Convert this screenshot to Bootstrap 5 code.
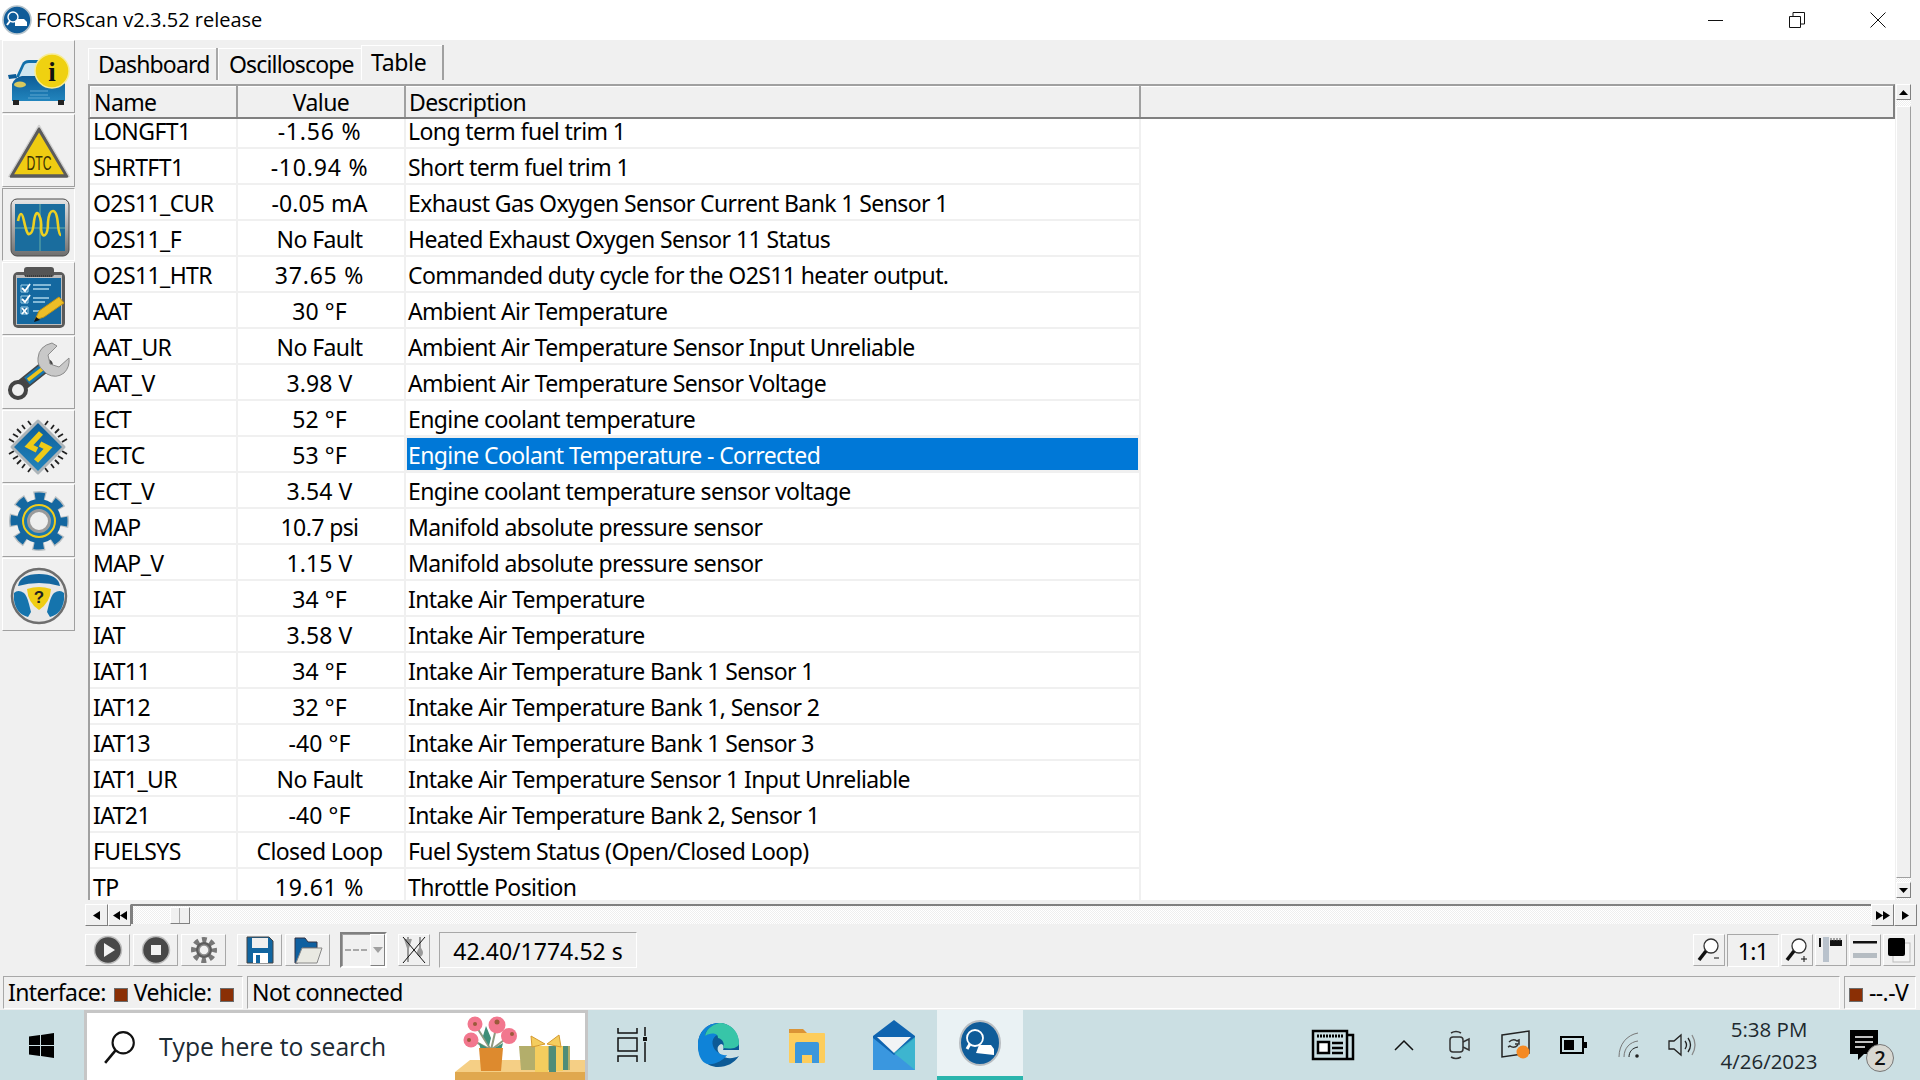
<!DOCTYPE html>
<html lang="en"><head><meta charset="utf-8"><title>FORScan</title>
<link href="https://cdn.jsdelivr.net/npm/bootstrap@5.3.0/dist/css/bootstrap.min.css" rel="stylesheet">
<style>
html,body{height:100%;overflow:hidden;background:#f0f0f0}
body{font-family:"Noto Sans","Liberation Sans",sans-serif;font-size:23px;letter-spacing:-.6px;color:#000}
.shell{height:1080px;width:1920px}
.titlebar{height:40px;background:#fff;font-family:"Open Sans",sans-serif;font-size:20px;letter-spacing:0;padding-left:2px}
.titlebar .wctl{width:81px;height:40px}
.winbody{height:936px}
.sidebar{width:88px;padding-left:2px;flex:none}
.sidebtn{width:73px;height:73px;margin-bottom:1px;background:#f0f0f0;border:1px solid;border-color:#fff #a0a0a0 #a0a0a0 #fff;padding:0;display:block;border-radius:0}
.sidebtn svg{display:block;width:71px;height:71px}
.sidebtn.on{border-color:#a0a0a0 #fff #fff #a0a0a0}
.work{width:1832px;flex:none}
.tabs{height:44px;padding-top:4px;border:0;flex-wrap:nowrap}
.tabs .nav-link{height:32px;margin:4px 0 0;padding:0 0 0 10px;border:0;border-radius:0;background:#f0f0f0;color:#000;line-height:33px;border-right:2px solid #a8a8a8;box-shadow:inset 1px 1px 0 #fff;font-size:23px;white-space:nowrap;letter-spacing:-.85px}
.tabs .nav-link.active{height:35px;margin-top:1px;background:#f0f0f0;line-height:34px;color:#000;border-right:2px solid #a0a0a0;letter-spacing:-.3px}
.tab1{width:130px}
.tabs .nav-link.tab2{width:143px;padding-left:11px;border-right:0}
.tab3{width:83px}
.gridrow{height:816px}
.gridmain{width:1807px;flex:none}
.gridhead{height:35px;border:2px solid #a0a0a0;border-right-color:#808080;border-bottom-color:#808080;background:#f0f0f0;line-height:33px;box-shadow:inset 1px 1px 0 #fff}
.gridhead>div{height:100%;flex:none}
.hc1{width:148px;padding-left:4px;border-right:2px solid #a0a0a0}
.hc2{width:168px;text-align:center;border-right:2px solid #a0a0a0}
.hc3{width:735px;padding-left:3px;border-right:2px solid #a0a0a0}
.rowsview{height:781px;overflow:hidden;background:#fff;border-left:2px solid #a0a0a0}
table.sheet{width:1051px;margin:-6px 0 0;table-layout:fixed;border-collapse:separate;border-spacing:0;background:#fff;--bs-table-bg:#fff}
table.sheet td{height:36px;padding:3px 0 0 3px;border:0;border-right:2px solid #f0f0f0;border-bottom:2px solid #f0f0f0;line-height:31px;white-space:nowrap;overflow:hidden;color:#000;font-size:23px;background:#fff}
table.sheet td.cv{text-align:center;padding:3px 3px 0 0}
table.sheet td.nm{letter-spacing:.1px}
table.sheet td.pc{letter-spacing:.8px}
table.sheet td.dsc{padding-left:2px}
table.sheet td.picked{background:#0078d7;color:#fff;box-shadow:inset 0 0 0 1px #f0f0f0}
.colname{width:148px}.colval{width:168px}.coldesc{width:735px}
.vscroll{width:15px;margin-left:1px;background:repeating-conic-gradient(#eee 0 25%,#fff 0 50%) 0 0/2px 2px}
.sbtn{background:#f0f0f0;border:1px solid;border-color:#fff #808080 #808080 #fff;display:flex;align-items:center;justify-content:center;padding:0}
.vscroll .sbtn{height:16px;width:15px}
.vthumb{height:772px;background:#f0f0f0;border:1px solid;border-color:#fff #a0a0a0 #a0a0a0 #fff;margin-top:6px}
.hscroll{height:22px;margin-top:4px;margin-left:-3px}
.hscroll .sbtn{width:23px;height:22px}
.htrack{width:1740px;height:20px;border-top:2px solid #808080;border-left:2px solid #808080;background:repeating-conic-gradient(#eee 0 25%,#fff 0 50%) 0 0/2px 2px;position:relative;flex:none}
.hthumb{position:absolute;left:37px;top:1px;width:20px;height:17px;background:#f0f0f0;border:1px solid;border-color:#fff #808080 #808080 #fff}
.hthumb::after{content:"";position:absolute;left:8px;top:0;bottom:0;border-left:1px solid #aaa}
.toolbar{height:38px;margin-top:5px;margin-left:-3px;gap:3px}
.rgrp{gap:2px}
.tool{width:45px;height:32px;background:#f0f0f0;border:1px solid;border-color:#fff #a8a8a8 #a8a8a8 #fff;padding:0;display:flex;align-items:center;justify-content:center;flex:none;border-radius:0}
.tool.nar{width:32px}
.combo{width:47px;height:36px;margin:0 8px 0 7px;border:2px solid;border-color:#808080 #fff #fff #808080;background:#f0f0f0;box-shadow:inset 1px 1px 0 #a0a0a0;flex:none;position:relative;display:flex;align-items:center;padding-left:3px}
.combo b{display:block;width:22px;border-top:2px dashed #a8a8a8}
.combo i{position:absolute;right:0;top:0;bottom:0;width:15px;border:1px solid;border-color:#fff #808080 #808080 #fff;background:#f0f0f0}
.combo i::after{content:"";position:absolute;left:2px;top:12px;border:5px solid transparent;border-top:6px solid #a0a0a0}
.timebox{width:198px;height:36px;margin-left:6px;padding-top:2px;line-height:32px;text-align:center;border:1px solid;border-color:#a8a8a8 #fff #fff #a8a8a8;flex:none;letter-spacing:0}
.ratio{width:52px;height:33px;line-height:33px;text-align:center;border:1px solid;border-color:#a8a8a8 #fff #fff #a8a8a8;flex:none}
.statusbar{height:33px;padding:0 4px 0 3px;line-height:30px}
.stcell{height:33px;border:1px solid;border-color:#a8a8a8 #fff #fff #a8a8a8;padding:0 0 0 4px;flex:none;white-space:nowrap}
.led{display:inline-block;width:14px;height:14px;background:#8a2f05;border:1px solid #6c6c6c;margin:0 6px 0 8px;vertical-align:-1px}
.led.lead0{margin-left:0}
.taskbar{height:70px;margin-top:1px;background:#cbdfe3;font-family:"Open Sans",sans-serif;letter-spacing:0;color:#1c2a33}
.searchbox{width:504px;margin-left:2px;height:70px;background:#fff;border:3px solid #c6c6c6;border-bottom:0;font-size:24.700px;position:relative;flex:none;overflow:hidden}
.scene{position:absolute;left:368px;top:-3px}
.tbi{height:70px;display:flex;align-items:center;justify-content:center;flex:none;position:relative}
.tbi.cur{background:#eaf2f4;border-bottom:4px solid #2bb5ad}
.clock{width:122px;text-align:center;font-size:20.500px;line-height:32px;padding-top:3px;color:#20292e}
.nbadge{position:absolute;left:36px;top:34px;width:28px;height:28px;border-radius:50%;background:#d8d8d2;border:1px solid #777;font-size:20px;font-weight:600;line-height:26px;text-align:center;color:#111}
</style></head><body>
<div class="shell d-flex flex-column">

<header class="titlebar d-flex align-items-center">
<svg width="30" height="30" viewBox="0 0 30 30"><circle cx="15" cy="15" r="14" fill="#0f5c99" stroke="#b7c4cc" stroke-width="1.600"/><circle cx="11" cy="12" r="5" fill="none" stroke="#fff" stroke-width="1.400"/><path d="M8 16l-3 4" stroke="#fff" stroke-width="2"/><path d="M13 17l3-3h6l3 3v4H13z" fill="#fff"/></svg>
<span class="ms-1 flex-grow-1">FORScan v2.3.52 release</span>
<div class="wctl d-flex align-items-center justify-content-center"><svg width="16" height="16"><path d="M0 8.500h15" stroke="#111"/></svg></div>
<div class="wctl d-flex align-items-center justify-content-center"><svg width="16" height="16"><path d="M.5 4.500h11v11H.5zM4 4V.5h11.500V12H12" fill="none" stroke="#111"/></svg></div>
<div class="wctl d-flex align-items-center justify-content-center"><svg width="16" height="16"><path d="M.5.5l15 15M15.500.5l-15 15" stroke="#111"/></svg></div>
<div style="width:2px"></div>
</header>

<div class="winbody d-flex">
<aside class="sidebar">
<button class="sidebtn"><svg viewBox="0 0 71 71"><defs>
<linearGradient id="bl" x1="0" y1="0" x2="0" y2="1"><stop offset="0" stop-color="#0d5c97"/><stop offset="1" stop-color="#2285bd"/></linearGradient>
<linearGradient id="sv" x1="0" y1="0" x2="0" y2="1"><stop offset="0" stop-color="#e6e6e6"/><stop offset="1" stop-color="#6e6e6e"/></linearGradient></defs>
<path d="M5 34l8-1 1 4-8 1z" fill="#0d5c97"/><path d="M13 36l6-13q2-4 7-4h20v18z" fill="#1170aa"/><path d="M16 36l5-11q1-3 5-3h17l3 14z" fill="#cfe6ef"/>
<path d="M9 43q3-7 10-8h28q12 1 15 8v17H9z" fill="url(#bl)"/><rect x="10" y="59" width="6" height="5" fill="#222"/><rect x="55" y="59" width="6" height="5" fill="#222"/><ellipse cx="17" cy="43.500" rx="6" ry="3" fill="#d8c95d"/><path d="M27 50h18M27 54h18M25 57h22" stroke="#5fa6cf" stroke-width="1"/>
<circle cx="49" cy="30" r="17" fill="#efd111" stroke="#f7ec94" stroke-width="1.500"/><text x="49" y="40" font-family="Liberation Serif,serif" font-weight="700" font-size="27" text-anchor="middle" fill="#111">i</text></svg></button>
<button class="sidebtn"><svg viewBox="0 0 71 71"><path d="M36 14L8 61h56z" fill="#efcc12" stroke="#5b5b5b" stroke-width="3.500" stroke-linejoin="round"/><path d="M36 10L5.500 62" stroke="#d0d0d0" stroke-width="1.400"/><path d="M36 10l30.500 52" stroke="#d0d0d0" stroke-width="1.400"/><text x="36" y="55" font-family="Liberation Sans,sans-serif" font-size="20" text-anchor="middle" fill="#3b3204" textLength="25" lengthAdjust="spacingAndGlyphs">DTC</text></svg></button>
<button class="sidebtn on"><svg viewBox="0 0 71 71"><rect x="8" y="10" width="58" height="57" rx="6" fill="url(#sv)" stroke="#4a4a4a"/><rect x="12" y="15" width="50" height="47" fill="#1a6d9e"/><path d="M37 15v47M12 39h50" stroke="#68b0a5" stroke-width="1"/><path d="M15 32q3-14 6 0t5 13q4 0 5-13 2-12 5-6t2 14q1 8 4 6t3-13q1-11 5-11t5 14q1 10 3 10" fill="none" stroke="#edd022" stroke-width="2.600"/></svg></button>
<button class="sidebtn"><svg viewBox="0 0 71 71"><rect x="10" y="9" width="52" height="56" rx="5" fill="#5a5a5a"/><rect x="13" y="12" width="46" height="50" fill="#bdbdbd"/><rect x="14" y="15" width="44" height="46" fill="#1468a0"/><rect x="21" y="4" width="30" height="10" rx="3" fill="#555"/><path d="M22 13h28" stroke="#222" stroke-dasharray="1 1"/><g fill="none" stroke="#fff" stroke-width="1.800"><path d="M18 22h7v7h-7zM18 33h7v7h-7zM18 44h7v7h-7z" stroke-width="1" stroke="#9fd0e8"/><path d="M19 25l3 3 5-7M19 36l3 3 5-7M19 45l5 6m0-6l-5 6"/><path d="M30 22h18M30 26h16M30 35h16M30 39h12M30 48h10" stroke="#a9d3e9" stroke-width="1.500"/></g><path d="M32 57l4-9 20-14 5 6-20 14z" fill="#edbe27" stroke="#c49512"/><path d="M31 59l2-5 4 3z" fill="#111"/></svg></button>
<button class="sidebtn"><svg viewBox="0 0 71 71"><path d="M44 28L14 52" stroke="#454545" stroke-width="12" stroke-linecap="round"/><path d="M44 28L24 44" stroke="#1775ad" stroke-width="9"/><path d="M43 29L25 43" stroke="#ecc51c" stroke-width="3.500"/><circle cx="15" cy="53" r="8" fill="#efefef" stroke="#444" stroke-width="4"/><path d="M49 6q-13 3-14 15-1 8 6 13l3 3q9 5 17-1 6-6 5-15l-10 9-9-3-2-9 9-9z" fill="#c8c8c8" stroke="#8b8b8b"/></svg></button>
<button class="sidebtn"><svg viewBox="0 0 71 71"><g stroke="#222" stroke-width="1.800"><path d="M6 28l5 3M10 23l5 3M14 18l4 4M19 14l3 4M25 10l3 4M45 10l-3 4M51 14l-3 4M56 18l-4 4M60 23l-5 3M64 28l-5 3M6 43l5-3M10 48l5-3M14 53l4-4M19 57l3-4M25 61l3-4M45 61l-3-4M51 57l-3-4M56 53l-4-4M60 48l-5-3M64 43l-5-3"/></g><path d="M35 10l26 26-26 26L9 36z" fill="url(#bl)" stroke="#adb4b8" stroke-width="3" stroke-linejoin="round"/><path d="M38 22L26 35l8 4M33 50l12-13-8-4" fill="none" stroke="#efcb16" stroke-width="5.500"/></svg></button>
<button class="sidebtn"><svg viewBox="0 0 71 71"><circle cx="36" cy="36" r="24.500" fill="none" stroke="#b9bfc2" stroke-width="11" stroke-dasharray="11.500 7.740" stroke-dashoffset="5.700"/><circle cx="36" cy="36" r="24.500" fill="none" stroke="#1467a0" stroke-width="8" stroke-dasharray="9.500 9.740" stroke-dashoffset="4.700"/><circle cx="36" cy="36" r="22" fill="#1467a0"/><circle cx="36" cy="36" r="16" fill="#1b78af" stroke="#efcc1c" stroke-width="2"/><circle cx="36" cy="36" r="10.500" fill="#efefef" stroke="#9a9a9a" stroke-width="3"/></svg></button>
<button class="sidebtn"><svg viewBox="0 0 71 71"><circle cx="36" cy="37" r="27" fill="#e8e8e8" stroke="#6e6e6e" stroke-width="2.500"/><path d="M15 27q2-12 21-12t21 12q-21-6-42 0z" fill="#1467a0"/><path d="M11 34q4-4 10 0 3 3 5 11l2 8-3 5Q13 55 11 41z" fill="#1574ad"/><path d="M61 34q-4-4-10 0-3 3-5 11l-2 8 3 5q12-3 14-17z" fill="#1574ad"/><path d="M24 30q12-4 24 0-1 14-12 21-11-7-12-21z" fill="#efcd14"/><text x="36" y="44" font-family="Liberation Sans,sans-serif" font-weight="700" font-size="17" text-anchor="middle" fill="#222">?</text></svg></button>
</aside>

<main class="work">
<ul class="nav tabs">
<li><a class="nav-link tab1">Dashboard</a></li>
<li><a class="nav-link tab2">Oscilloscope</a></li>
<li><a class="nav-link tab3 active">Table</a></li>
</ul>
<div class="gridrow d-flex">
<div class="gridmain">
<div class="gridhead d-flex"><div class="hc1">Name</div><div class="hc2">Value</div><div class="hc3">Description</div></div>
<div class="rowsview">
<table class="table sheet"><colgroup><col class="colname"><col class="colval"><col class="coldesc"></colgroup><tbody>
<tr><td>LONGFT1</td><td class="cv pc">-1.56 %</td><td class="dsc">Long term fuel trim 1</td></tr>
<tr><td>SHRTFT1</td><td class="cv pc">-10.94 %</td><td class="dsc">Short term fuel trim 1</td></tr>
<tr><td>O2S11_CUR</td><td class="cv nm">-0.05 mA</td><td class="dsc">Exhaust Gas Oxygen Sensor Current Bank 1 Sensor 1</td></tr>
<tr><td>O2S11_F</td><td class="cv">No Fault</td><td class="dsc">Heated Exhaust Oxygen Sensor 11 Status</td></tr>
<tr><td>O2S11_HTR</td><td class="cv pc">37.65 %</td><td class="dsc">Commanded duty cycle for the O2S11 heater output.</td></tr>
<tr><td>AAT</td><td class="cv nm">30 °F</td><td class="dsc">Ambient Air Temperature</td></tr>
<tr><td>AAT_UR</td><td class="cv">No Fault</td><td class="dsc">Ambient Air Temperature Sensor Input Unreliable</td></tr>
<tr><td>AAT_V</td><td class="cv nm">3.98 V</td><td class="dsc">Ambient Air Temperature Sensor Voltage</td></tr>
<tr><td>ECT</td><td class="cv nm">52 °F</td><td class="dsc">Engine coolant temperature</td></tr>
<tr><td>ECTC</td><td class="cv nm">53 °F</td><td class="dsc picked">Engine Coolant Temperature - Corrected</td></tr>
<tr><td>ECT_V</td><td class="cv nm">3.54 V</td><td class="dsc">Engine coolant temperature sensor voltage</td></tr>
<tr><td>MAP</td><td class="cv">10.7 psi</td><td class="dsc">Manifold absolute pressure sensor</td></tr>
<tr><td>MAP_V</td><td class="cv nm">1.15 V</td><td class="dsc">Manifold absolute pressure sensor</td></tr>
<tr><td>IAT</td><td class="cv nm">34 °F</td><td class="dsc">Intake Air Temperature</td></tr>
<tr><td>IAT</td><td class="cv nm">3.58 V</td><td class="dsc">Intake Air Temperature</td></tr>
<tr><td>IAT11</td><td class="cv nm">34 °F</td><td class="dsc">Intake Air Temperature Bank 1 Sensor 1</td></tr>
<tr><td>IAT12</td><td class="cv nm">32 °F</td><td class="dsc">Intake Air Temperature Bank 1, Sensor 2</td></tr>
<tr><td>IAT13</td><td class="cv nm">-40 °F</td><td class="dsc">Intake Air Temperature Bank 1 Sensor 3</td></tr>
<tr><td>IAT1_UR</td><td class="cv">No Fault</td><td class="dsc">Intake Air Temperature Sensor 1 Input Unreliable</td></tr>
<tr><td>IAT21</td><td class="cv nm">-40 °F</td><td class="dsc">Intake Air Temperature Bank 2, Sensor 1</td></tr>
<tr><td>FUELSYS</td><td class="cv">Closed Loop</td><td class="dsc">Fuel System Status (Open/Closed Loop)</td></tr>
<tr><td>TP</td><td class="cv pc">19.61 %</td><td class="dsc">Throttle Position</td></tr>
</tbody></table>
</div></div>
<div class="vscroll">
<div class="sbtn"><svg width="9" height="5"><path d="M4.500 0L9 5H0z"/></svg></div>
<div class="vthumb"></div>
<div class="sbtn mt-1"><svg width="9" height="5"><path d="M0 0h9L4.500 5z"/></svg></div>
</div>
</div>
<div class="hscroll d-flex">
<div class="sbtn"><svg width="7" height="9"><path d="M7 0v9L0 4.500z"/></svg></div>
<div class="sbtn"><svg width="14" height="9"><path d="M7 0v9L0 4.500zM14 0v9L7 4.500z"/></svg></div>
<div class="htrack"><div class="hthumb"></div></div>
<div class="sbtn"><svg width="14" height="9"><path d="M0 0v9l7-4.500zM7 0v9l7-4.500z"/></svg></div>
<div class="sbtn"><svg width="7" height="9"><path d="M0 0v9l7-4.500z"/></svg></div>
</div>
<div class="toolbar d-flex align-items-center">
<button class="tool"><svg width="30" height="30" viewBox="0 0 30 30"><circle cx="15" cy="15" r="13.500" fill="#484848" stroke="#bdbdbd" stroke-width="1.500"/><path d="M11 8l11 7-11 7z" fill="#f2f2f2"/></svg></button>
<button class="tool"><svg width="30" height="30" viewBox="0 0 30 30"><circle cx="15" cy="15" r="13.500" fill="#484848" stroke="#bdbdbd" stroke-width="1.500"/><rect x="10" y="10" width="10" height="10" fill="#f2f2f2"/></svg></button>
<button class="tool"><svg width="30" height="30" viewBox="0 0 30 30"><circle cx="15" cy="15" r="10" fill="none" stroke="#777" stroke-width="6" stroke-dasharray="4.500 3.350" stroke-dashoffset="2.200"/><circle cx="15" cy="15" r="8" fill="#5c5c5c"/><circle cx="15" cy="15" r="5" fill="#f0f0f0" stroke="#8c8c8c" stroke-width="1.500"/></svg></button>
<button class="tool" style="margin-left:8px"><svg width="28" height="28" viewBox="0 0 28 28"><path d="M1 1h22l4 4v22H1z" fill="#1165a0" stroke="#444"/><rect x="6" y="2" width="16" height="10" fill="#efefef"/><rect x="7" y="17" width="15" height="10" fill="#fff"/><rect x="10" y="19" width="4" height="8" fill="#1165a0"/></svg></button>
<button class="tool"><svg width="30" height="28" viewBox="0 0 30 28"><path d="M2 27V2h10l3 4h9v6H10L5 27z" fill="#0f60a0" stroke="#334"/><path d="M9 12h20l-5 15H3z" fill="#e9e9e2" stroke="#888"/></svg></button>
<div class="combo"><b></b><i></i></div>
<button class="tool nar"><svg width="26" height="28" viewBox="0 0 26 28"><path d="M7 1v8M4 3l3 9 3-9M7 10v16M19 1v16M19 12q-4 6 0 8 4-2 0-8" stroke="#999" fill="#999" stroke-width="2"/><path d="M2 1l22 26M24 1L2 27" stroke="#111" stroke-width="1"/></svg></button>
<div class="timebox">42.40/1774.52 s</div>
<div class="flex-grow-1"></div>
<div class="rgrp d-flex align-items-center">
<button class="tool nar"><svg width="26" height="26" viewBox="0 0 26 26"><circle cx="15" cy="9" r="7" fill="#fff" stroke="#333" stroke-width="1.300"/><path d="M10 14L3 23" stroke="#111" stroke-width="3.500"/><path d="M18 21h5" stroke="#111"/></svg></button>
<div class="ratio">1:1</div>
<button class="tool nar"><svg width="26" height="26" viewBox="0 0 26 26"><circle cx="15" cy="9" r="7" fill="#fff" stroke="#333" stroke-width="1.300"/><path d="M10 14L3 23" stroke="#111" stroke-width="3.500"/><path d="M17 22h6M20 19v6" stroke="#111"/></svg></button>
<button class="tool nar"><svg width="24" height="26" viewBox="0 0 24 26"><rect x="4" y="0" width="6" height="25" fill="#b9c2cc"/><rect x="0" y="1" width="2" height="9" fill="#111"/><rect x="11" y="3" width="12" height="6" fill="#111"/><path d="M12 1v3M15 1v3M18 1v3M21 1v3" stroke="#555"/></svg></button>
<button class="tool nar"><svg width="24" height="22" viewBox="0 0 24 22"><rect x="0" y="2" width="24" height="2.500" fill="#111"/><rect x="0" y="14" width="24" height="5" fill="#b5bcc2"/></svg></button>
<button class="tool nar"><svg width="24" height="26" viewBox="0 0 24 26"><rect x="6" y="6" width="17" height="19" fill="#f4f4f4" stroke="#bbb"/><rect x="1" y="1" width="17" height="18" rx="2" fill="#000"/></svg></button>
</div>
<div style="width:2px"></div>
</div>
</main>
</div>

<footer class="statusbar d-flex">
<div class="stcell me-1" style="width:240px">Interface:<span class="led"></span>Vehicle:<span class="led"></span></div>
<div class="stcell flex-grow-1">Not connected</div>
<div class="stcell ms-1" style="width:72px"><span class="led lead0"></span>--.-V</div>
</footer>

<nav class="taskbar d-flex">
<div class="tbi" style="width:82px"><svg width="25" height="25" viewBox="0 0 25 25" fill="#000"><path d="M0 3.500L11 2v10H0zM12 2l13-2v12H12zM0 13h11v10L0 21.500zM12 13h13v12l-13-2z"/></svg></div>
<div class="searchbox d-flex align-items-center">
<svg class="ms-3" width="34" height="34" viewBox="0 0 32 32" style="flex:none;margin-right:22px"><circle cx="19" cy="12" r="10" fill="none" stroke="#111" stroke-width="2"/><path d="M12 19L2 31" stroke="#111" stroke-width="2.400"/></svg>
<span>Type here to search</span>
<svg class="scene" width="135" height="70" viewBox="0 0 135 70">
<path d="M15 50h120v20H0l0-8z" fill="#f5cf85"/><path d="M0 62h135v8H0z" fill="#e0a84e"/>
<g stroke="#8f9a80" stroke-width="2" fill="none"><path d="M36 40L21 16M36 40l6-26M36 40L53 27M36 40L17 30"/></g>
<path d="M24 33l10 6-8 2zM48 33l-10 6 8 2zM31 16l5 12 -2 8-6-10z" fill="#3e8f78"/>
<circle cx="20" cy="14" r="7.500" fill="#f2778e"/><circle cx="42" cy="15" r="8.500" fill="#f2778e"/><circle cx="54" cy="26" r="8" fill="#f2778e"/><circle cx="16" cy="30" r="7.500" fill="#f2778e"/>
<circle cx="20" cy="14" r="2" fill="#9a5a3a"/><circle cx="42" cy="12" r="2.500" fill="#9a5a3a"/><circle cx="57" cy="24" r="2" fill="#9a5a3a"/><circle cx="14" cy="30" r="2" fill="#9a5a3a"/>
<path d="M24 38h24l-2 23H26z" fill="#dd8a2e"/>
<path d="M64 36h51v24H66z" fill="#b3ae6b"/><path d="M80 36h13v26H80z" fill="#f4cd5e"/><path d="M94 36h7v26h-7zM108 36h5v24h-5z" fill="#4f8d78"/><path d="M101 36h7v25h-7z" fill="#f4cd5e"/>
<path d="M90 34L76 26l1 11zM92 34l12-9 2 12z" fill="#f4cd5e" stroke="#d59a30"/></svg>
</div>
<div class="tbi" style="width:87px"><svg width="30" height="36" viewBox="0 0 30 36" fill="none" stroke="#111" stroke-width="1.500"><path d="M1 1v5h19V1M1 11h19v13H1zM1 35v-6h19v6M28 0v9M28 15v20"/><rect x="26" y="10" width="4" height="4" fill="#111" stroke="none"/></svg></div>
<div class="tbi" style="width:88px"><svg width="42" height="44" viewBox="0 0 42 44"><path d="M41 20C40 8 32 0 21 0 9 0 0 9 0 22c0 13 9 22 20 22 9 0 16-4 21-11-6 3-14 3-18-1-4-3-5-9 0-11 3 0 3 4 2 6h16z" fill="#0c5a96"/><path d="M0 22C0 9 9 0 21 0c-9 3-14 8-14 13 4-4 11-5 17-2-7 0-11 5-9 12 2 6 9 10 14 9-4 6-16 12-22 8C2 37 0 30 0 22z" fill="#0f83d8"/><path d="M21 0c11 0 20 8 20 20 0 6-10 6-16 5 2-4 0-9-5-10 0-6-9-5-13-2C8 7 13 2 21 0z" fill="#37c5a8"/></svg></div>
<div class="tbi" style="width:87px"><svg width="38" height="38" viewBox="0 0 38 38"><path d="M1 3h14l4 4h-18z" fill="#db9436"/><rect x="1" y="7" width="36" height="30" rx="1" fill="#fdcd5c"/><path d="M7 37V18q0-2 2-2h20q2 0 2 2v19h-7v-8H14v8z" fill="#3b97dc"/></svg></div>
<div class="tbi" style="width:87px"><svg width="42" height="50" viewBox="0 0 42 50"><path d="M21 0L42 16v34H0V16z" fill="#0f64b0"/><path d="M0 18l21 17 21-17v32H0z" fill="#3a97df"/><path d="M4 17h34L21 33z" fill="#f1f3f5"/><path d="M21 33l21-16v33z" fill="#3fc2c8" opacity=".7"/></svg></div>
<div class="tbi cur" style="width:86px"><svg width="42" height="46" viewBox="0 0 42 46"><ellipse cx="21" cy="23" rx="20" ry="22" fill="#0f5c99" stroke="#b8bdc1" stroke-width="2"/><circle cx="16" cy="18" r="8" fill="none" stroke="#fff" stroke-width="1.800"/><path d="M11 24l-3 5" stroke="#fff" stroke-width="3"/><path d="M17 33l3-8h12l3 4v6z" fill="#fff"/></svg></div>
<div class="flex-grow-1"></div>
<div class="tbi" style="width:86px"><svg width="44" height="32" viewBox="0 0 44 32" fill="none" stroke="#000" stroke-width="2.500"><path d="M2 2h34v28H2zM36 6h6v24h-6"/><path d="M6 7h26" stroke-width="3" stroke-dasharray="2 1"/><path d="M7 13h11v11H7z" fill="#fff"/><path d="M21 14h11M21 19h11M21 24h11"/></svg></div>
<div class="tbi" style="width:56px"><svg width="20" height="12" viewBox="0 0 20 12"><path d="M1 11l9-9 9 9" fill="none" stroke="#111" stroke-width="1.500"/></svg></div>
<div class="tbi" style="width:56px"><svg width="24" height="30" viewBox="0 0 24 30" fill="none" stroke="#333" stroke-width="1.500"><rect x="2" y="7" width="13" height="15" rx="3"/><path d="M15 12l6-3v11l-6-3M3 3q5-3 10 0M3 27q5 3 10 0"/></svg></div>
<div class="tbi" style="width:56px"><svg width="30" height="30" viewBox="0 0 30 30"><path d="M1 5L28 1v22L1 27z" fill="none" stroke="#222" stroke-width="1.500"/><path d="M8 12q4-4 8-1l2-1v4h-4M17 15q-4 4-8 1l-2 1" fill="none" stroke="#333" stroke-width="1.500"/><circle cx="22" cy="22" r="6.500" fill="#f58a23"/></svg></div>
<div class="tbi" style="width:58px"><svg width="27" height="18" viewBox="0 0 27 18"><rect x="1" y="1" width="22" height="16" fill="none" stroke="#000" stroke-width="2"/><rect x="4" y="4" width="10" height="10"/><rect x="24" y="6" width="3" height="6"/></svg></div>
<div class="tbi" style="width:54px"><svg width="24" height="26" viewBox="0 0 24 26" fill="none" stroke="#777"><path d="M2 25C2 12 10 3 21 1M7 25c0-9 6-15 14-16"/><path d="M12 25c0-5 3-9 9-10" stroke="#222"/><circle cx="20" cy="24" r="1.800" fill="#222" stroke="none"/></svg></div>
<div class="tbi" style="width:52px"><svg width="28" height="24" viewBox="0 0 28 24" fill="none" stroke="#222" stroke-width="1.300"><path d="M1 8h5l7-6v20l-7-6H1z"/><path d="M17 8q3 4 0 8M20 5q5 7 0 14"/><path d="M24 2q6 10 0 20" stroke="#888"/></svg></div>
<div class="tbi clock d-block">5:38 PM<br>4/26/2023</div>
<div class="tbi" style="width:68px"><svg width="28" height="30" viewBox="0 0 28 30"><path d="M0 0h28v24H14l-6 6v-6H0z" fill="#000"/><path d="M5 7h18M5 12h18M5 17h10" stroke="#fff" stroke-width="1.500"/></svg><span class="nbadge">2</span></div>
<div style="width:22px"></div>
</nav>
</div>
<script src="https://cdn.jsdelivr.net/npm/bootstrap@5.3.0/dist/js/bootstrap.bundle.min.js"></script>
</body></html>
